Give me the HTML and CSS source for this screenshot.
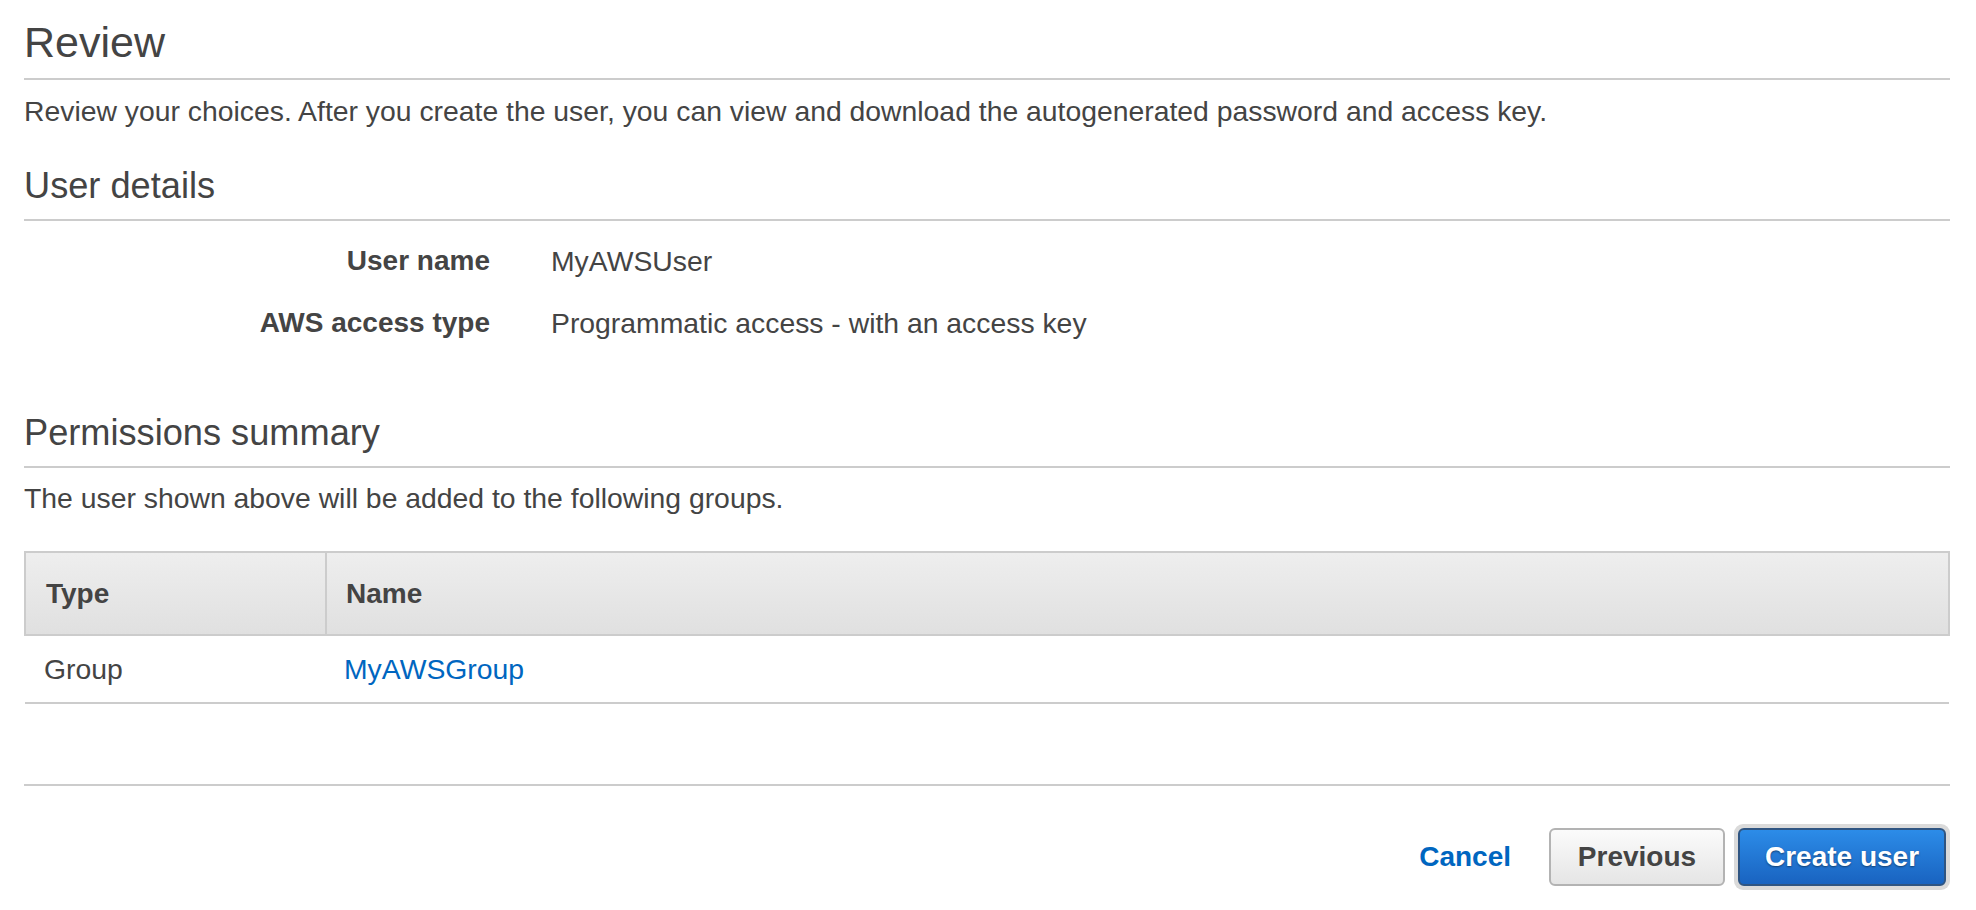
FILE: index.html
```html
<!DOCTYPE html>
<html lang="en">
<head>
<meta charset="utf-8">
<title>Review</title>
<link rel="stylesheet" href="styles.css">
</head>
<body>
<main class="page">
  <h1 class="page-title">Review</h1>
  <p class="lead">Review your choices. After you create the user, you can view and download the autogenerated password and access key.</p>

  <h2 class="section-title">User details</h2>
  <dl class="details">
    <div class="detail-row">
      <dt class="detail-label">User name</dt>
      <dd class="detail-value">MyAWSUser</dd>
    </div>
    <div class="detail-row">
      <dt class="detail-label">AWS access type</dt>
      <dd class="detail-value">Programmatic access - with an access key</dd>
    </div>
  </dl>

  <h2 class="section-title section-title--perm">Permissions summary</h2>
  <p class="lead lead--perm">The user shown above will be added to the following groups.</p>

  <table class="groups">
    <thead>
      <tr>
        <th class="col-type">Type</th>
        <th class="col-name">Name</th>
      </tr>
    </thead>
    <tbody>
      <tr>
        <td class="col-type">Group</td>
        <td class="col-name"><a class="link" href="#">MyAWSGroup</a></td>
      </tr>
    </tbody>
  </table>

  <footer class="actions">
    <a class="btn-link" href="#">Cancel</a>
    <button class="btn btn-secondary" type="button">Previous</button>
    <span class="btn-ring"><button class="btn btn-primary" type="button">Create user</button></span>
  </footer>
</main>
</body>
</html>
```

FILE: styles.css
```css
* { box-sizing: border-box; }

html, body {
  margin: 0;
  padding: 0;
  background: #ffffff;
}

body {
  font-family: "Liberation Sans", Arial, Helvetica, sans-serif;
  color: #444444;
  font-size: 28.35px;
}

.page {
  padding: 0 26px 0 24px;
}

.page-title {
  margin: 0;
  padding: 17px 0 11px;
  font-size: 43px;
  font-weight: 400;
  line-height: 50px;
  color: #444444;
  border-bottom: 2px solid #cccccc;
}

.lead {
  margin: 13px 0 0;
  line-height: 36px;
}

.section-title {
  margin: 35px 0 0;
  padding: 0 0 11px;
  font-size: 36.2px;
  font-weight: 400;
  line-height: 44px;
  color: #444444;
  border-bottom: 2px solid #cccccc;
}

.section-title--perm {
  margin-top: 70px;
}

.lead--perm {
  margin-top: 12px;
}

.details {
  margin: 22px 0 0;
  display: flex;
  flex-direction: column;
  gap: 26px;
}

.detail-row {
  display: grid;
  grid-template-columns: 466px 1fr;
  column-gap: 61px;
  line-height: 36px;
}

.detail-label {
  margin: 0;
  text-align: right;
  font-weight: 700;
  font-size: 28px;
}

.detail-value {
  margin: 0;
}

.groups {
  margin-top: 35px;
  width: 100%;
  border-collapse: collapse;
  font-size: 28.35px;
}

.groups th {
  text-align: left;
  font-weight: 700;
  font-size: 28px;
  height: 83px;
  padding: 0 0 0 19px;
  background: linear-gradient(#eeeeee, #e0e0e0);
  border: 2px solid #cccccc;
}

.groups th.col-type {
  width: 301px;
  padding-left: 20px;
}

.groups td {
  height: 68px;
  padding: 0 0 0 18px;
  border-bottom: 2px solid #cccccc;
}

.groups td.col-type {
  padding-left: 19px;
}

.link {
  color: #0066c0;
  text-decoration: none;
}

.actions {
  margin-top: 80px;
  border-top: 2px solid #cccccc;
  padding-top: 38px;
  display: flex;
  justify-content: flex-end;
  align-items: center;
}

.btn-link {
  color: #0066c0;
  font-weight: 700;
  font-size: 28px;
  text-decoration: none;
  margin-right: 38px;
}

.btn {
  font-family: "Liberation Sans", Arial, Helvetica, sans-serif;
  font-size: 28px;
  font-weight: 700;
  height: 58px;
  border-radius: 6px;
  padding: 0 20px;
  cursor: pointer;
}

.btn-secondary {
  width: 176px;
  color: #444444;
  background: linear-gradient(#fbfbfb, #e5e5e5);
  border: 2px solid #b3b3b3;
  margin-right: 9px;
}

.btn-ring {
  display: inline-flex;
  padding: 4px;
  border-radius: 9px;
  background: #dadada;
}

.btn-primary {
  width: 208px;
  color: #ffffff;
  background: linear-gradient(#2c8ce8, #1963c0);
  border: 2px solid #2f5582;
  text-shadow: 0 1px 2px rgba(0,0,0,0.45);
}
```
